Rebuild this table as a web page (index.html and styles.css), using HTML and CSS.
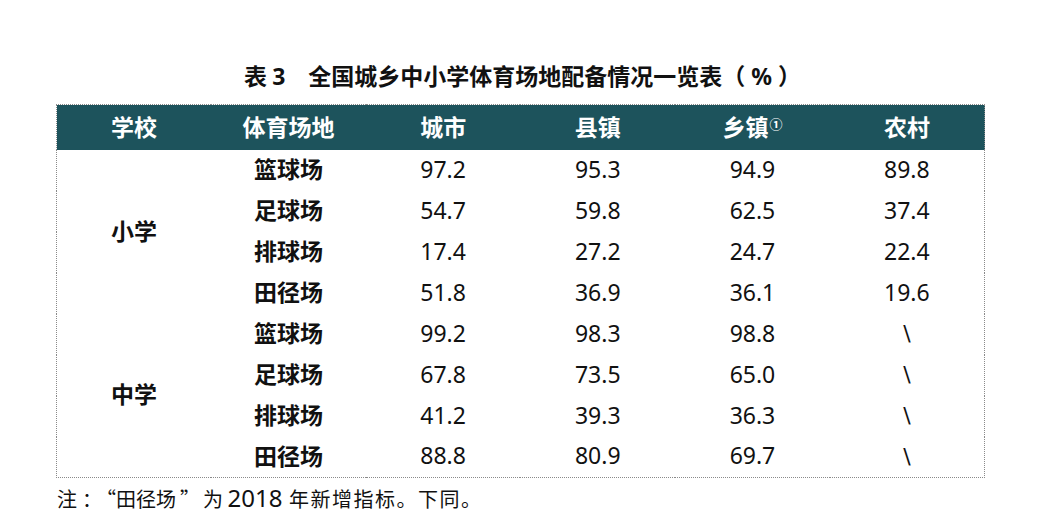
FILE: index.html
```html
<!DOCTYPE html>
<html lang="zh-CN">
<head>
<meta charset="utf-8">
<title>表 3 全国城乡中小学体育场地配备情况一览表</title>
<link rel="stylesheet" href="styles.css">
</head>
<body>
<div class="page">
  <h1 class="title">表 <span class="num">3</span>　全国城乡中小学体育场地配备情况一览表（<span class="num pct">%</span>）</h1>
  <table class="data">
    <thead>
      <tr>
        <th>学校</th>
        <th>体育场地</th>
        <th>城市</th>
        <th>县镇</th>
        <th>乡镇<span class="note">①</span></th>
        <th>农村</th>
      </tr>
    </thead>
    <tbody>
      <tr><td class="school" rowspan="4">小学</td><td class="field">篮球场</td><td>97.2</td><td>95.3</td><td>94.9</td><td>89.8</td></tr>
      <tr><td class="field">足球场</td><td>54.7</td><td>59.8</td><td>62.5</td><td>37.4</td></tr>
      <tr><td class="field">排球场</td><td>17.4</td><td>27.2</td><td>24.7</td><td>22.4</td></tr>
      <tr><td class="field">田径场</td><td>51.8</td><td>36.9</td><td>36.1</td><td>19.6</td></tr>
      <tr><td class="school" rowspan="4">中学</td><td class="field">篮球场</td><td>99.2</td><td>98.3</td><td>98.8</td><td class="na">\</td></tr>
      <tr><td class="field">足球场</td><td>67.8</td><td>73.5</td><td>65.0</td><td class="na">\</td></tr>
      <tr><td class="field">排球场</td><td>41.2</td><td>39.3</td><td>36.3</td><td class="na">\</td></tr>
      <tr><td class="field">田径场</td><td>88.8</td><td>80.9</td><td>69.7</td><td class="na">\</td></tr>
    </tbody>
  </table>
  <p class="footnote">注<span class="colon">：</span><span class="q">“</span>田径场<span class="q">”</span><span class="wei">为</span> <span class="num">2018</span> <span class="tail">年新增指标。下同。</span></p>
</div>
</body>
</html>
```

FILE: styles.css
```css
html, body {
  margin: 0;
  padding: 0;
  background: #ffffff;
}

body {
  font-family: "Noto Sans CJK SC", "Noto Sans", sans-serif;
  color: #111111;
}

.page {
  width: 1045px;
  padding-top: 60px;
}

.num {
  font-family: "Noto Sans", "Noto Sans CJK SC", sans-serif;
}

.title {
  margin: 0 0 14px 0;
  padding-left: 0;
  height: 30px;
  line-height: 30px;
  font-size: 23px;
  font-weight: 700;
  text-align: center;
}

.title .pct {
  margin: 0 6px;
}

.data {
  margin-left: 56px;
  width: 929px;
  border-collapse: collapse;
  table-layout: fixed;
  border: 1px dotted #8a8a8a;
  font-family: "Noto Sans", "Noto Sans CJK SC", sans-serif;
}

.data th,
.data td {
  box-sizing: border-box;
}

.data th {
  height: 45px;
  padding: 0 0 1px 0;
  background: #1d535c;
  color: #ffffff;
  font-family: "Noto Sans CJK SC", sans-serif;
  font-size: 23px;
  font-weight: 700;
  text-align: center;
  vertical-align: middle;
  line-height: 1;
}

.data th .note {
  font-size: 13px;
  vertical-align: 7px;
  margin-left: 1px;
}

.data td {
  height: 41px;
  padding: 0 0 2px 0;
  font-size: 23px;
  text-align: center;
  vertical-align: middle;
  line-height: 1;
}

.data td.school,
.data td.field {
  font-family: "Noto Sans CJK SC", sans-serif;
  font-weight: 700;
  padding-bottom: 3px;
}

.data td.na {
  font-family: "DejaVu Sans", sans-serif;
  font-size: 22px;
  padding: 0;
}

.footnote {
  margin: 6px 0 0 57px;
  font-size: 20px;
  line-height: 28px;
}

.footnote .colon {
  margin-left: 5px;
}

.footnote .q {
  margin-left: 4px;
}

.footnote .wei {
  margin-left: 3px;
}

.footnote .num {
  font-size: 24px;
}

.footnote .tail {
  margin-left: 2px;
  letter-spacing: 1.5px;
}
```
